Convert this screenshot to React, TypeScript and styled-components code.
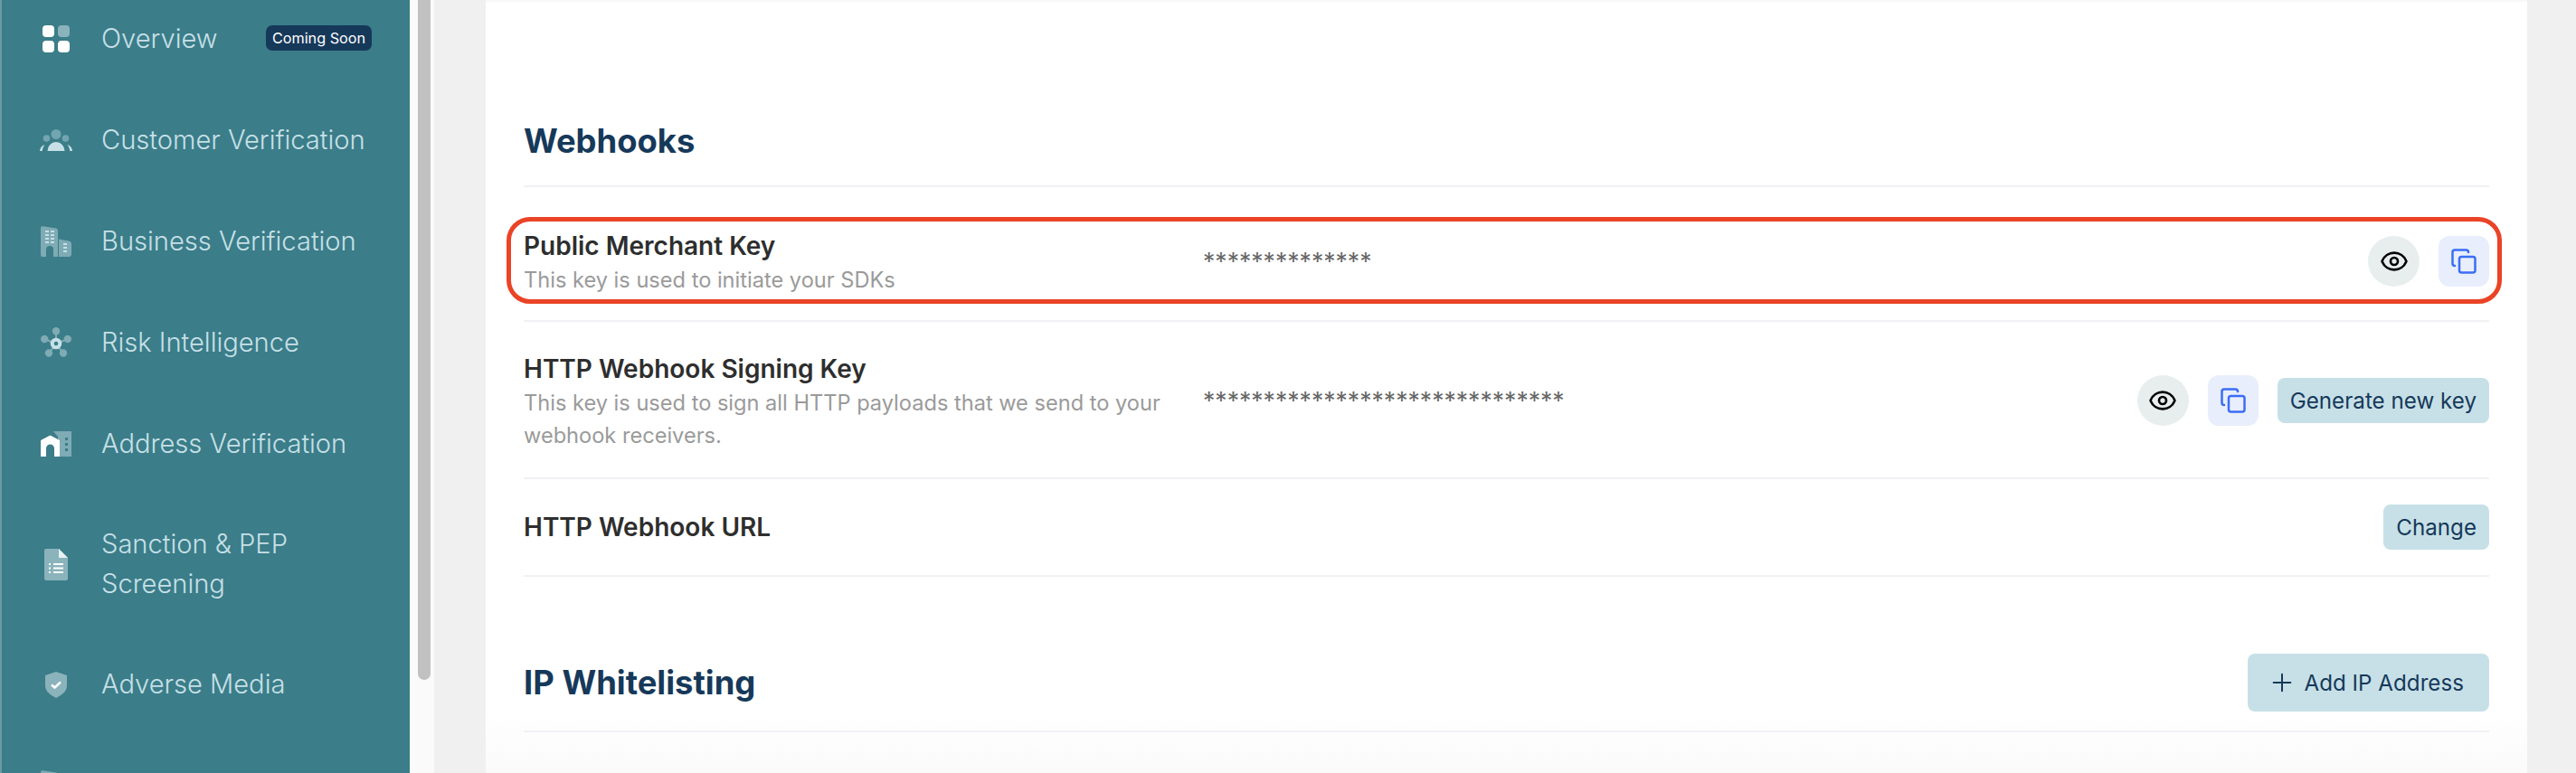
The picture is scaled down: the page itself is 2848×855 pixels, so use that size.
import React from 'react';
import styled, { createGlobalStyle } from 'styled-components';
import { Copy, Eye, Plus } from 'lucide-react';

const GlobalStyle = createGlobalStyle`
  html, body {
    margin: 0;
    height: 100%;
    overflow: hidden;
    background: #f0f0f0;
    font-family: Inter, "Liberation Sans", sans-serif;
  }
`;

const Page = styled.div`
  display: flex;
  height: 855px;
  overflow: hidden;
`;

const Sidebar = styled.nav`
  width: 453px;
  flex-shrink: 0;
  height: 855px;
  box-sizing: border-box;
  padding: 13px 42px 0;
  overflow: hidden;
  background: #3b7d89;
  border-left: 2px solid #6a9ba4;
  display: flex;
  flex-direction: column;
  gap: 52px;
`;

const NavItem = styled.div`
  display: flex;
  align-items: center;
  gap: 32px;
  min-height: 60px;
  flex-shrink: 0;
`;

const NavIcon = styled.span`
  width: 36px;
  flex-shrink: 0;
  display: flex;
  justify-content: center;
`;

const NavLabel = styled.span`
  padding: 7px 0;
  font-size: 29.1px;
  line-height: 44px;
  font-weight: 300;
  color: #c7e0e7;
`;

const Badge = styled.span`
  margin: -2px 0 0 auto;
  height: 28px;
  width: 117px;
  display: flex;
  flex-shrink: 0;
  align-items: center;
  justify-content: center;
  border-radius: 7px;
  background: #16395a;
  color: #fff;
  font-size: 16.2px;
`;

const ScrollTrack = styled.div`
  width: 27px;
  flex-shrink: 0;
  box-sizing: border-box;
  padding: 0 4px 0 9px;
  background: #fafafa;
`;

const ScrollThumb = styled.div`
  height: 752px;
  background: #c1c1c1;
  border-radius: 0 0 8px 8px;
`;

const Main = styled.main`
  flex: 1;
  padding: 0 54px 0 57px;
  min-width: 0;
`;

const Card = styled.div`
  height: 855px;
  box-sizing: border-box;
  padding: 0 42px;
  background: linear-gradient(#fff 92%, #fafafa);
  border-top: 2px solid #f8f8fa;
`;

const SectionHeader = styled.div<{ $top: number; $bottom: number }>`
  display: flex;
  align-items: center;
  justify-content: space-between;
  margin-top: ${(p) => p.$top}px;
  padding-bottom: ${(p) => p.$bottom}px;
  border-bottom: 2px solid #f1f1f6;
`;

const Heading = styled.h2`
  margin: 0;
  font-size: 36.4px;
  line-height: 44px;
  font-weight: 700;
  color: #16395a;
`;

const Row = styled.div<{ $top: number; $bottom: number }>`
  position: relative;
  display: flex;
  align-items: center;
  padding: ${(p) => p.$top}px 0 ${(p) => p.$bottom}px;
  border-bottom: 2px solid #f1f1f6;
`;

const Highlight = styled.div`
  position: absolute;
  left: -19px;
  right: -14px;
  top: 33px;
  height: 96px;
  box-sizing: border-box;
  border: 5px solid #ea4326;
  border-radius: 26px;
`;

const RowText = styled.div<{ $shift?: number }>`
  width: 751px;
  flex-shrink: 0;
  margin-top: ${(p) => p.$shift ?? 0}px;
`;

const RowTitle = styled.div`
  font-size: 28px;
  line-height: 36px;
  font-weight: 600;
  color: #2e2e2e;
`;

const RowHint = styled.div`
  margin-top: 2px;
  width: 720px;
  font-size: 23.6px;
  line-height: 36px;
  color: #9a9a9a;
`;

const Masked = styled.div`
  font-size: 26.6px;
  color: #666;
`;

const Actions = styled.div`
  margin-left: auto;
  display: flex;
  align-items: center;
  gap: 21px;
`;

const EyeButton = styled.button`
  width: 57px;
  height: 56px;
  padding: 0;
  border: 0;
  border-radius: 50%;
  background: #e8eeee;
  color: #000;
  display: flex;
  align-items: center;
  justify-content: center;
`;

const CopyButton = styled.button`
  width: 56px;
  height: 56px;
  padding: 0;
  border: 0;
  border-radius: 12px;
  background: #e8eefc;
  color: #3b6ef6;
  display: flex;
  align-items: center;
  justify-content: center;
`;

const TextButton = styled.button`
  height: 50px;
  padding: 0 14px;
  border: 0;
  border-radius: 8px;
  background: #c7e0e7;
  color: #16395a;
  font-family: inherit;
  font-size: 24.2px;
  white-space: nowrap;
`;

const AddButton = styled(TextButton)`
  height: 64px;
  padding: 0 28px 0 22px;
  display: flex;
  align-items: center;
  gap: 8px;
`;

function OverviewIcon() {
  return (
    <svg width="30" height="30" viewBox="0 0 30 30">
      <rect width="13" height="13" rx="4" fill="#fff" />
      <rect x="17" width="13" height="13" rx="4" fill="#8ab3bb" />
      <rect y="17" width="13" height="13" rx="4" fill="#fff" />
      <rect x="17" y="17" width="13" height="13" rx="4" fill="#fff" />
    </svg>
  );
}

function CustomerIcon() {
  return (
    <svg width="36" height="24" viewBox="0 0 36 24">
      <circle cx="18" cy="5.5" r="5.5" fill="#72a5b0" />
      <circle cx="7.5" cy="10" r="3.8" fill="#72a5b0" />
      <circle cx="28.5" cy="10" r="3.8" fill="#72a5b0" />
      <path d="M8.5 24a9.5 10 0 0 1 19 0z" fill="#c7e0e7" />
      <path d="M0 24c.3-3.5 2.4-6 5.6-7-1.6 2-2.6 4.3-2.9 7z" fill="#c7e0e7" />
      <path d="M36 24c-.3-3.5-2.4-6-5.6-7 1.6 2 2.6 4.3 2.9 7z" fill="#c7e0e7" />
    </svg>
  );
}

function BusinessIcon() {
  return (
    <svg width="34" height="34" viewBox="0 0 34 34">
      <path d="M0 2Q0 0 2 .3L17 2.5Q19 3 19 5V34H14V26a4 4 0 0 0-8 0V34H2Q0 34 0 32Z" fill="#7eabb4" />
      <path d="M20 14.5 31 16.5Q34 17 34 20V31Q34 34 31 34H20Z" fill="#7eabb4" />
      <path d="M5 6h4M11 6h4M5 10h4M11 10h4M5 14h4M11 14h4M5 18h4M11 18h4M25 20h4M25 24h4M25 28h4" stroke="#c7e0e7" strokeWidth="1.8" />
    </svg>
  );
}

function RiskIcon() {
  return (
    <svg width="34" height="34" viewBox="0 0 34 34">
      <path d="M17 18V4M17 18 4 13M17 18l13-5M17 18 9 29M17 18l8 11" stroke="#7eabb4" strokeWidth="2" />
      <circle cx="17" cy="4.3" r="4.2" fill="#7eabb4" />
      <circle cx="4.2" cy="13" r="4.2" fill="#7eabb4" />
      <circle cx="29.8" cy="13" r="4.2" fill="#7eabb4" />
      <circle cx="9" cy="28.5" r="4.2" fill="#7eabb4" />
      <circle cx="25" cy="28.5" r="4.2" fill="#7eabb4" />
      <circle cx="17" cy="18" r="4.3" fill="#3b7d89" stroke="#c7e0e7" strokeWidth="4" />
    </svg>
  );
}

function AddressIcon() {
  return (
    <svg width="34" height="28" viewBox="0 0 34 28">
      <path d="M14 0H34V28H19V6Z" fill="#7eabb4" />
      <path d="M27 7h3v3h-3zM27 13h3v3h-3zM27 19h3v3h-3z" fill="#3b7d89" />
      <path d="M0 10 10.5 4.5 21 10V28H15V19a4.5 4.5 0 0 0-9 0V28H0Z" fill="#fff" />
    </svg>
  );
}

function DocumentIcon() {
  return (
    <svg width="26" height="35" viewBox="0 0 26 35">
      <path d="M2 0H16L26 10V33a2 2 0 0 1-2 2H2a2 2 0 0 1-2-2V2a2 2 0 0 1 2-2Z" fill="#8ab3bb" />
      <path d="M16 0 26 10H16Z" fill="#e8f1f3" />
      <path d="M5 16h2v2H5zM5 20.5h2v2H5zM5 25h2v2H5zM10 16h11v2H10zM10 20.5h11v2H10zM10 25h11v2H10z" fill="#fff" />
    </svg>
  );
}

function ShieldIcon() {
  return (
    <svg width="24" height="29" viewBox="0 0 24 29">
      <path d="M12 0 24 4V15C24 22 18 26 12 29 6 26 0 22 0 15V4Z" fill="#8ab3bb" />
      <path d="M7 14.5 10.500 17.500 17 11.500" fill="none" stroke="#fff" strokeWidth="2.5" />
    </svg>
  );
}

const navItems: { label: string; icon: React.ReactNode; badge?: string }[] = [
  { label: 'Overview', icon: <OverviewIcon />, badge: 'Coming Soon' },
  { label: 'Customer Verification', icon: <CustomerIcon /> },
  { label: 'Business Verification', icon: <BusinessIcon /> },
  { label: 'Risk Intelligence', icon: <RiskIcon /> },
  { label: 'Address Verification', icon: <AddressIcon /> },
  { label: 'Sanction & PEP Screening', icon: <DocumentIcon /> },
  { label: 'Adverse Media', icon: <ShieldIcon /> },
  { label: '', icon: <BusinessIcon /> },
];

function KeyActions() {
  return (
    <>
      <EyeButton>
        <Eye size={32} strokeWidth={2} />
      </EyeButton>
      <CopyButton>
        <Copy size={30} strokeWidth={2} />
      </CopyButton>
    </>
  );
}

function App() {
  return (
    <Page>
      <GlobalStyle />
      <Sidebar>
        {navItems.map((item) => (
          <NavItem key={item.label || 'more'}>
            <NavIcon>{item.icon}</NavIcon>
            <NavLabel>{item.label}</NavLabel>
            {item.badge && <Badge>{item.badge}</Badge>}
          </NavItem>
        ))}
      </Sidebar>
      <ScrollTrack>
        <ScrollThumb />
      </ScrollTrack>
      <Main>
        <Card>
          <SectionHeader $top={132} $bottom={27}>
            <Heading>Webhooks</Heading>
          </SectionHeader>
          <Row $top={43} $bottom={26}>
            <Highlight />
            <RowText $shift={4}>
              <RowTitle>Public Merchant Key</RowTitle>
              <RowHint>This key is used to initiate your SDKs</RowHint>
            </RowText>
            <Masked>**************</Masked>
            <Actions>
              <KeyActions />
            </Actions>
          </Row>
          <Row $top={30} $bottom={28}>
            <RowText $shift={4}>
              <RowTitle>HTTP Webhook Signing Key</RowTitle>
              <RowHint>This key is used to sign all HTTP payloads that we send to your webhook receivers.</RowHint>
            </RowText>
            <Masked>******************************</Masked>
            <Actions>
              <KeyActions />
              <TextButton>Generate new key</TextButton>
            </Actions>
          </Row>
          <Row $top={28} $bottom={28}>
            <RowText>
              <RowTitle>HTTP Webhook URL</RowTitle>
            </RowText>
            <Actions>
              <TextButton>Change</TextButton>
            </Actions>
          </Row>
          <SectionHeader $top={85} $bottom={21}>
            <Heading>IP Whitelisting</Heading>
            <AddButton>
              <Plus size={32} strokeWidth={1.5} />
              Add IP Address
            </AddButton>
          </SectionHeader>
        </Card>
      </Main>
    </Page>
  );
}

export default App;
